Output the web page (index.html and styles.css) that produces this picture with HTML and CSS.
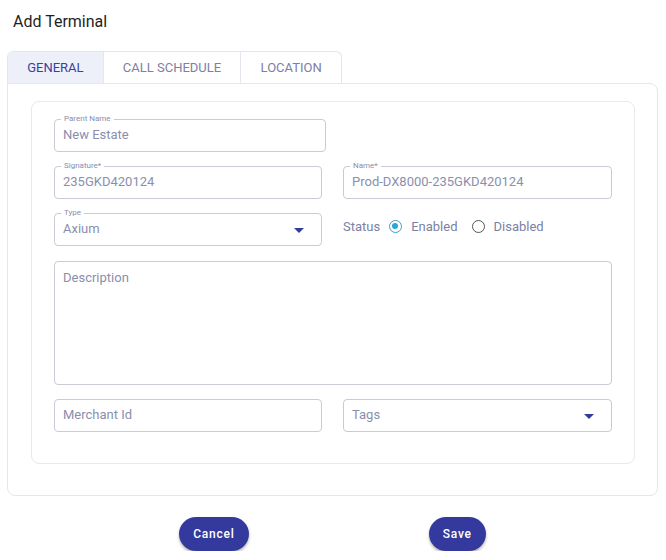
FILE: index.html
```html
<!DOCTYPE html>
<html lang="en">
<head>
  <meta charset="UTF-8" />
  <title>Add Terminal</title>
  <link rel="stylesheet" href="styles.css">
</head>
<body>
  <div class="page">
    <h1 class="title">Add Terminal</h1>

    <div class="tabs">
      <div class="tab active">GENERAL</div>
      <div class="tab">CALL SCHEDULE</div>
      <div class="tab">LOCATION</div>
    </div>

    <div class="card">
      <div class="inner">
        <div class="form-grid">
          <div class="field wide">
            <span class="legend">Parent Name</span>
            <span class="value">New Estate</span>
          </div>
          <div></div>

          <div class="field">
            <span class="legend">Signature*</span>
            <span class="value">235GKD420124</span>
          </div>
          <div class="field">
            <span class="legend">Name*</span>
            <span class="value">Prod-DX8000-235GKD420124</span>
          </div>

          <div class="field">
            <span class="legend">Type</span>
            <span class="value">Axium</span>
            <span class="caret"></span>
          </div>
          <div class="status">
            <span>Status</span>
            <label class="radio"><span class="dot on"></span>Enabled</label>
            <label class="radio"><span class="dot"></span>Disabled</label>
          </div>

          <div class="field area span2">
            <span class="value">Description</span>
          </div>

          <div class="field">
            <span class="value">Merchant Id</span>
          </div>
          <div class="field">
            <span class="value">Tags</span>
            <span class="caret"></span>
          </div>
        </div>
      </div>
    </div>

    <div class="actions">
      <button class="btn">Cancel</button>
      <button class="btn">Save</button>
    </div>
  </div>
</body>
</html>
```

FILE: styles.css
```css
* {
  box-sizing: border-box;
  margin: 0;
  padding: 0;
}

body {
  font-family: Roboto, 'Liberation Sans', sans-serif;
  background: #fff;
  color: #222;
}

.page {
  padding: 12px 8px 0 7px;
}

.title {
  font-size: 16px;
  font-weight: 400;
  line-height: 20px;
  margin-left: 6px;
  color: #1f1f1f;
}

.tabs {
  display: flex;
  width: 335px;
  margin-top: 19px;
  border: 1px solid #e4e5ee;
  border-bottom: none;
  border-radius: 6px 6px 0 0;
  overflow: hidden;
}

.tab {
  height: 31px;
  line-height: 31px;
  font-size: 13px;
  color: #7d80a3;
  text-align: center;
  border-right: 1px solid #e4e5ee;
}

.tab:nth-child(1) { width: 96px; }
.tab:nth-child(2) { width: 138px; }
.tab:nth-child(3) { width: 100px; border-right: none; }

.tab.active {
  background: #eef0f9;
  color: #3a3f9b;
}

.card {
  width: 651px;
  border: 1px solid #e6e6ec;
  border-radius: 0 8px 8px 8px;
  padding: 17px 22px 31px 23px;
}

.inner {
  border: 1px solid #e8e8ee;
  border-radius: 8px;
  padding: 17px 22px 31px 22px;
}

.form-grid {
  display: grid;
  grid-template-columns: 268px 269px;
  column-gap: 21px;
  row-gap: 14px;
}

.field {
  position: relative;
  height: 33px;
  border: 1px solid #c9cad3;
  border-radius: 4px;
  padding: 0 8px 2px;
  display: flex;
  align-items: center;
}

.field.wide { width: 272px; }

.span2 { grid-column: 1 / 3; }

.field.area {
  height: 124px;
  align-items: flex-start;
  padding-top: 8px;
  margin-top: 1px;
}

.legend {
  position: absolute;
  top: -6px;
  left: 6px;
  padding: 0 3px;
  background: #fff;
  font-size: 8px;
  line-height: 10px;
  color: #8b8ea8;
}

.value {
  font-size: 13px;
  color: #8a8fae;
  line-height: 16px;
}

.caret {
  position: absolute;
  right: 17px;
  top: 14px;
  width: 0;
  height: 0;
  border-left: 5px solid transparent;
  border-right: 5px solid transparent;
  border-top: 5px solid #333a9a;
}

.status {
  display: flex;
  align-items: center;
  font-size: 13px;
  color: #7d80a3;
  height: 26px;
}

.radio {
  display: flex;
  align-items: center;
  margin-left: 9px;
  gap: 9px;
}

.radio + .radio { margin-left: 14px; }

.dot {
  width: 13px;
  height: 13px;
  border: 1.5px solid #555;
  border-radius: 50%;
  position: relative;
}

.dot.on { border-color: #2ba5db; }

.dot.on::after {
  content: "";
  position: absolute;
  left: 2px;
  top: 2px;
  width: 6px;
  height: 6px;
  border-radius: 50%;
  background: #2ba5db;
}

.actions {
  display: flex;
  justify-content: center;
  gap: 180px;
  margin-top: 21px;
}

.btn {
  height: 34px;
  border: none;
  border-radius: 17px;
  background: #343a9d;
  color: #fff;
  font-family: Roboto, 'Liberation Sans', sans-serif;
  font-size: 12px;
  font-weight: 500;
  letter-spacing: 0.8px;
  padding: 0 14px;
  box-shadow: 0 2px 3px rgba(0, 0, 0, 0.3);
}
```
